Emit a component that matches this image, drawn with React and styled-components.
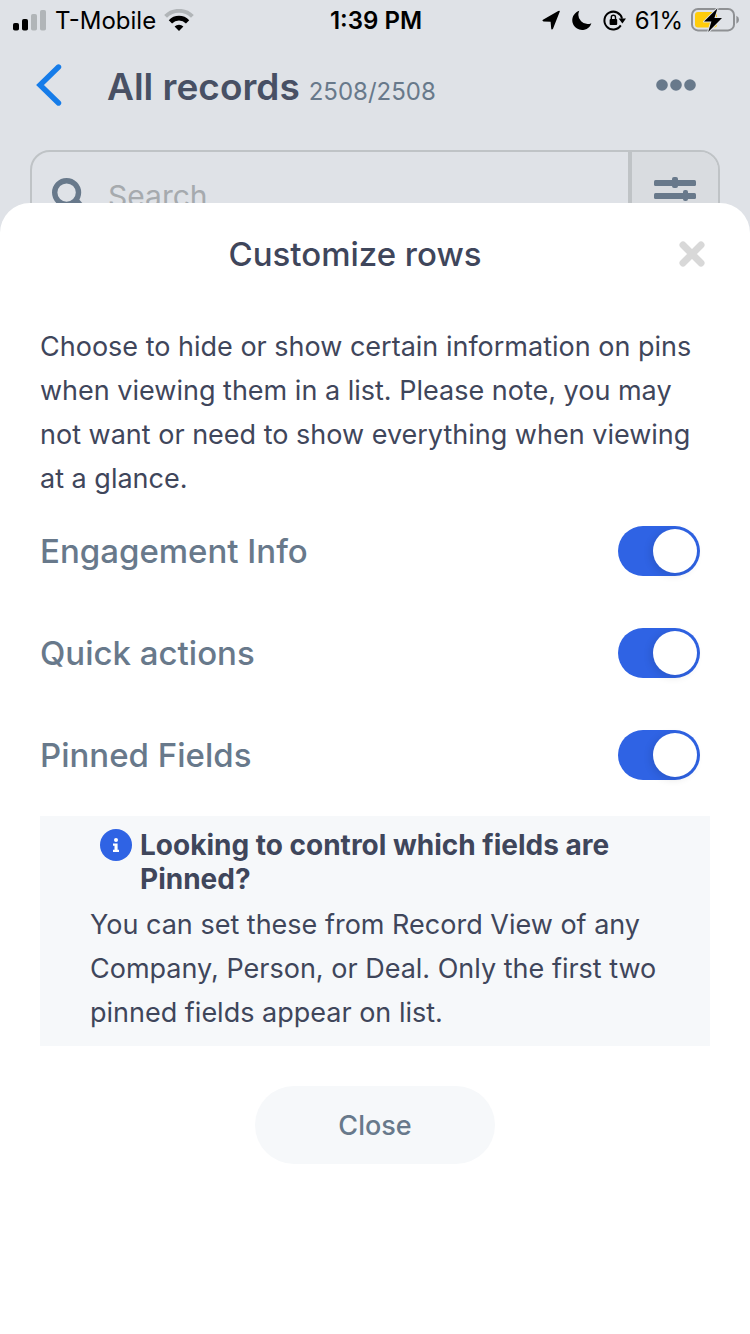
import React, { useState } from "react";
import styled, { createGlobalStyle } from "styled-components";

const App = () => {
  const [rows, setRows] = useState([
    { id: "engagement", label: "Engagement Info", on: true },
    { id: "actions", label: "Quick actions", on: true },
    { id: "pinned", label: "Pinned Fields", on: true },
  ]);

  const toggle = (id) =>
    setRows(rows.map((row) => (row.id === id ? { ...row, on: !row.on } : row)));

  return (
    <Screen>
      <GlobalStyle />
      <StatusBar>
        <Side>
          <SignalIcon />
          <span>T-Mobile</span>
          <WifiIcon />
        </Side>
        <Clock>1:39 PM</Clock>
        <Side $end>
          <StatusIcons />
          <span>61%</span>
          <BatteryIcon />
        </Side>
      </StatusBar>

      <Header>
        <BackButton aria-label="Back">
          <svg width="26" height="42" viewBox="0 0 26 42">
            <path
              d="M22.5 3 L4 21 L22.5 39"
              fill="none"
              stroke="#167ce9"
              strokeWidth="5.4"
              strokeLinecap="round"
            />
          </svg>
        </BackButton>
        <h1>All records</h1>
        <small>2508/2508</small>
        <MoreButton aria-label="More">
          <svg width="40" height="12" viewBox="0 0 40 12">
            <g fill="#68798b">
              <circle cx="6" cy="6" r="5.8" />
              <circle cx="20" cy="6" r="5.8" />
              <circle cx="34" cy="6" r="5.8" />
            </g>
          </svg>
        </MoreButton>
      </Header>

      <SearchBar>
        <svg width="32" height="38" viewBox="0 0 32 38">
          <circle cx="14.6" cy="19.6" r="11.9" fill="none" stroke="#68798b" strokeWidth="5.4" />
          <path d="M23 27 L30 35" stroke="#68798b" strokeWidth="7" />
        </svg>
        <input type="text" placeholder="Search" aria-label="Search" />
        <FilterButton aria-label="Filters">
          <svg width="42" height="40" viewBox="0 0 42 40">
            <g fill="#68798b">
              <rect y="8" width="42" height="6" rx="1.5" />
              <rect x="18" y="5" width="6" height="11" rx="2" />
              <rect y="21" width="42" height="6" rx="1.5" />
              <rect x="29" y="18" width="5" height="11" rx="2" />
              <rect y="34" width="42" height="6" rx="1.5" />
            </g>
          </svg>
        </FilterButton>
      </SearchBar>

      <Sheet role="dialog" aria-labelledby="sheet-title">
        <SheetHeader>
          <h2 id="sheet-title">Customize rows</h2>
          <DismissButton aria-label="Dismiss">
            <svg width="26" height="26" viewBox="0 0 26 26">
              <path
                d="M4 4 L22 22 M22 4 L4 22"
                stroke="#d8d8d8"
                strokeWidth="7"
                strokeLinecap="round"
              />
            </svg>
          </DismissButton>
        </SheetHeader>
        <Text>
          Choose to hide or show certain information on pins when viewing them
          in a list. Please note, you may not want or need to show everything
          when viewing at a glance.
        </Text>
        <Options>
          {rows.map((row) => (
            <Option key={row.id}>
              <label htmlFor={row.id}>{row.label}</label>
              <Switch
                id={row.id}
                type="checkbox"
                role="switch"
                checked={row.on}
                onChange={() => toggle(row.id)}
              />
            </Option>
          ))}
        </Options>
        <Note>
          <NoteTitle>
            <svg width="32" height="34" viewBox="0 -1 32 34">
              <circle cx="16" cy="16" r="16" fill="#2f63e4" />
              <g fill="#fff">
                <circle cx="16" cy="11" r="2" />
                <path d="M13 14.5h4.6v6.2H19V23h-6v-2.3h1.5v-3.9H13z" />
              </g>
            </svg>
            <h3>Looking to control which fields are Pinned?</h3>
          </NoteTitle>
          <Text>
            You can set these from Record View of any Company, Person, or Deal.
            Only the first two pinned fields appear on list.
          </Text>
        </Note>
        <CloseButton>Close</CloseButton>
      </Sheet>
    </Screen>
  );
};

const SignalIcon = () => (
  <svg width="34" height="22" viewBox="0 0 34 22">
    <rect x="0" y="14" width="6" height="7.5" rx="1.8" />
    <rect x="9" y="10" width="6" height="11.5" rx="1.8" />
    <rect x="18" y="5" width="6" height="16.5" rx="1.8" fill="#b1b5b8" />
    <rect x="27" y="1" width="6" height="20.5" rx="1.8" fill="#b1b5b8" />
  </svg>
);

const WifiIcon = () => (
  <svg width="30" height="22" viewBox="0 0 30 22">
    <path d="M1.6 7.4 A19 19 0 0 1 28.4 7.4" fill="none" stroke="#b1b5b8" strokeWidth="4" />
    <path d="M6.4 12.8 A12 12 0 0 1 23.6 12.8" fill="none" stroke="#000" strokeWidth="4.6" />
    <path d="M10.6 17.6 A6.2 6.2 0 0 1 19.4 17.6 L15 22 Z" />
  </svg>
);

const StatusIcons = () => (
  <svg width="86" height="22" viewBox="0 0 86 22">
    <path d="M18.8 2.6 L12 19.8 Q10.8 21.6 10.2 19.4 L9.6 12.8 L2.6 12.4 Q0.4 11.6 2.4 10.4 L17.2 2 Q19 1.2 18.8 2.6 Z" />
    <path d="M38.3 1.8 A9.8 9.8 0 1 0 50.4 14.2 A9.3 9.3 0 0 1 38.3 1.8 Z" />
    <path
      d="M79.8 16.4 A8.9 8.9 0 1 1 81 9.6"
      fill="none"
      stroke="#000"
      strokeWidth="2"
    />
    <path d="M77.6 9.4 H85 L81.4 14.6 Z" />
    <rect x="68.6" y="10" width="7.6" height="6" rx="1" />
    <path d="M70.3 10.4 V8.4 A2.1 2.1 0 0 1 74.5 8.4 V10.4" fill="none" stroke="#000" strokeWidth="1.4" />
  </svg>
);

const BatteryIcon = () => (
  <svg width="48" height="26" viewBox="0 0 48 26">
    <rect x="1" y="2" width="42" height="21.4" rx="6" fill="none" stroke="#8f9194" strokeWidth="2" />
    <path d="M45.4 8.8 Q48 10 48 12.8 Q48 15.6 45.4 16.8 Z" fill="#8f9194" />
    <rect x="4" y="5" width="22" height="15.5" rx="3" fill="#ffcc0a" />
    <path
      d="M26.5 1.2 L13 14.6 H20.4 L17.2 25 L31 11 H23.4 Z"
      stroke="#dfe2e7"
      strokeWidth="2"
      strokeLinejoin="round"
      paintOrder="stroke"
    />
  </svg>
);

const GlobalStyle = createGlobalStyle`
  * {
    box-sizing: border-box;
    margin: 0;
    padding: 0;
  }

  body {
    font-family: Inter, "Liberation Sans", sans-serif;
    color: #3f465b;
    background-color: #dfe2e7;
  }

  button {
    border: none;
    background: none;
    font-family: inherit;
    cursor: pointer;
  }

  svg {
    display: block;
    flex-shrink: 0;
  }
`;

const Screen = styled.div`
  min-height: 100vh;
  display: flex;
  flex-direction: column;
`;

const StatusBar = styled.div`
  display: flex;
  align-items: center;
  height: 40px;
  padding: 0 11px 0 13px;
  color: #000;
  font-size: 24px;
`;

const Side = styled.div`
  flex: 1;
  display: flex;
  align-items: center;
  gap: 8px;
  justify-content: ${({ $end }) => ($end ? "flex-end" : "flex-start")};
`;

const Clock = styled.span`
  font-weight: 600;
`;

const Header = styled.header`
  display: flex;
  align-items: center;
  height: 90px;
  padding: 0 54px 0 36px;

  & h1 {
    margin: 2px 0 0 45px;
    font-size: 37px;
    font-weight: 600;
    color: #485064;
  }

  & small {
    margin: 12px 0 0 9px;
    font-size: 24px;
    color: #68798b;
  }
`;

const BackButton = styled.button`
  width: 26px;
`;

const MoreButton = styled.button`
  margin-left: auto;
`;

const SearchBar = styled.div`
  display: flex;
  align-items: center;
  height: 84px;
  margin: 20px 30px 0;
  border: 2px solid #bfc3c6;
  border-radius: 20px;
  padding-left: 20px;
  overflow: hidden;

  & input {
    flex: 1;
    min-width: 0;
    height: 100%;
    padding: 8px 0 0 24px;
    border: none;
    outline: none;
    background: none;
    font-family: inherit;
    font-size: 30px;
    color: #485064;
  }

  & input::placeholder {
    color: #a6aaae;
    opacity: 1;
  }
`;

const FilterButton = styled.button`
  display: grid;
  place-items: center;
  width: 90px;
  height: 100%;
  background-color: #d9dce0;

  && {
    border-left: 4px solid #bfc3c6;
  }
`;

const Sheet = styled.section`
  flex: 1;
  position: relative;
  display: flex;
  flex-direction: column;
  margin-top: -31px;
  padding: 0 40px 40px;
  border-radius: 30px 30px 0 0;
  background-color: white;
`;

const SheetHeader = styled.div`
  display: flex;
  align-items: center;
  height: 102px;
  margin-bottom: 20px;

  & h2 {
    flex: 1;
    text-align: center;
    font-size: 33px;
    font-weight: 500;
  }
`;

const DismissButton = styled.button`
  display: flex;
  justify-content: flex-end;
  width: 40px;
  padding-right: 5px;
`;

const Text = styled.p`
  font-size: 27px;
  line-height: 44px;
`;

const Options = styled.div`
  display: flex;
  flex-direction: column;
  gap: 52px;
  margin: 25px 0 36px;
`;

const Option = styled.div`
  display: flex;
  align-items: center;
  justify-content: space-between;
  padding-right: 10px;

  & label {
    font-size: 33px;
    font-weight: 500;
    color: #68798b;
  }
`;

const Switch = styled.input`
  appearance: none;
  display: flex;
  width: 82px;
  height: 50px;
  padding: 3px;
  border-radius: 25px;
  background-color: #d8d8d8;
  cursor: pointer;

  &::before {
    content: "";
    width: 44px;
    height: 44px;
    border-radius: 50%;
    background-color: white;
    box-shadow: rgba(0, 0, 0, 0.12) -2px 2px 8px;
  }

  &:checked {
    justify-content: flex-end;
    background-color: #2f63e4;
  }
`;

const Note = styled.div`
  padding: 12px 40px 11px 50px;
  background-color: #f6f8fa;
`;

const NoteTitle = styled.div`
  display: flex;
  gap: 8px;
  margin-bottom: 7px;
  padding-left: 10px;

  & h3 {
    font-size: 28px;
    line-height: 34px;
    font-weight: 700;
  }
`;

const CloseButton = styled.button`
  align-self: center;
  width: 240px;
  height: 78px;
  margin-top: 40px;
  border-radius: 39px;
  background-color: #f6f8fa;
  font-size: 27px;
  font-weight: 500;
  color: #68798b;
`;

export default App;
